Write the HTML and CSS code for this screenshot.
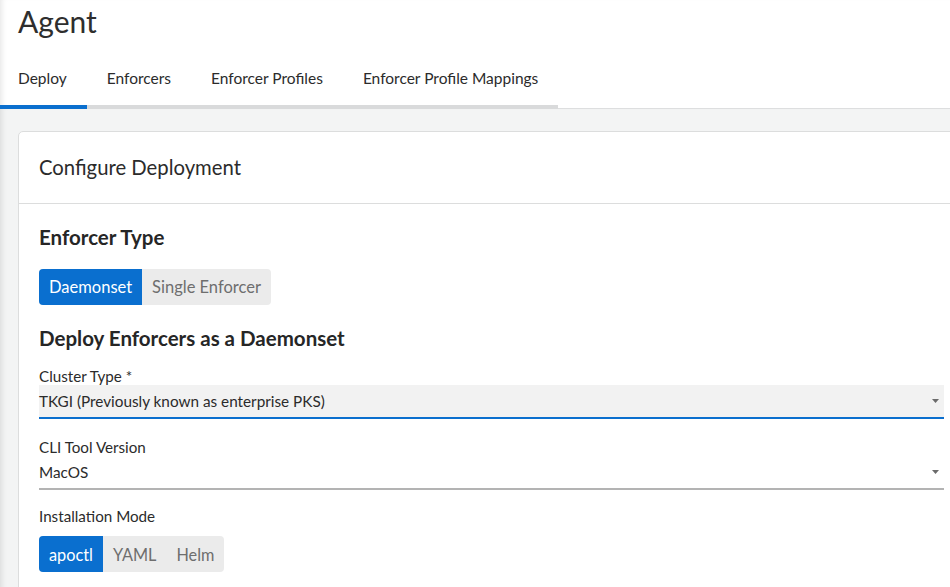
FILE: index.html
```html
<!DOCTYPE html>
<html lang="en">
<head>
<meta charset="utf-8">
<title>Agent</title>
<link rel="stylesheet" href="styles.css">
</head>
<body>
<div class="page">
  <header class="top">
    <h1 class="title">Agent</h1>
    <nav class="tabs">
      <a class="tab active">Deploy</a>
      <a class="tab">Enforcers</a>
      <a class="tab">Enforcer Profiles</a>
      <a class="tab">Enforcer Profile Mappings</a>
    </nav>
  </header>
  <main class="content">
    <section class="card">
      <div class="card-head">Configure Deployment</div>
      <div class="card-body">
        <h2 class="section-title">Enforcer Type</h2>
        <div class="seg seg-type">
          <span class="seg-btn on">Daemonset</span>
          <span class="seg-btn">Single Enforcer</span>
        </div>
        <h2 class="section-title sub">Deploy Enforcers as a Daemonset</h2>
        <div class="field first">
          <div class="label">Cluster Type *</div>
          <div class="select focused">
            <span class="value">TKGI (Previously known as enterprise PKS)</span>
            <svg class="caret" width="7" height="4" viewBox="0 0 7 4"><polygon points="0,0 7,0 3.5,4" fill="#6b6b6b"/></svg>
          </div>
        </div>
        <div class="field second">
          <div class="label">CLI Tool Version</div>
          <div class="select">
            <span class="value">MacOS</span>
            <svg class="caret" width="7" height="4" viewBox="0 0 7 4"><polygon points="0,0 7,0 3.5,4" fill="#6b6b6b"/></svg>
          </div>
        </div>
        <div class="field third">
          <div class="label">Installation Mode</div>
          <div class="seg seg-mode">
            <span class="seg-btn on">apoctl</span>
            <span class="seg-btn">YAML</span>
            <span class="seg-btn">Helm</span>
          </div>
        </div>
      </div>
    </section>
  </main>
</div>
</body>
</html>
```
FILE: styles.css
```css
* { box-sizing: border-box; }

html, body {
  margin: 0;
  padding: 0;
  height: 100%;
  overflow: hidden;
}

body {
  font-family: Lato, "Noto Sans", "Liberation Sans", sans-serif;
  color: #2b2b2b;
  background: #f3f4f4;
}

.page {
  display: flex;
  flex-direction: column;
  min-height: 100vh;
}

.top {
  background: #fff;
  height: 109px;
  display: flex;
  flex-direction: column;
  box-shadow: inset 6px 0 6px -5px rgba(0, 0, 0, 0.12), inset 0 -1px 0 #dedfe0;
}

.title {
  margin: 0;
  padding: 4px 0 0 18px;
  font-size: 30px;
  line-height: 35px;
  font-weight: 400;
  color: #2e2e2e;
}

.tabs {
  display: flex;
  align-self: flex-start;
}

.tab {
  display: block;
  padding: 30px 20px 18px;
  font-size: 15.5px;
  line-height: 18px;
  color: #2b2b2b;
  border-bottom: 4px solid #d9dadb;
}

.tab:first-child {
  padding-left: 18px;
}

.tab.active {
  border-bottom-color: #0b6fce;
}

.content {
  flex: 1;
  padding: 22px 0 0 18px;
  box-shadow: inset 6px 0 6px -5px rgba(0, 0, 0, 0.12);
}

.card {
  background: #fff;
  border: 1px solid #dcdddd;
  border-radius: 5px;
  margin-right: -15px;
  min-height: 100%;
}

.card-head {
  padding: 23px 20px 24px;
  font-size: 20.3px;
  line-height: 24px;
  color: #2b2b2b;
  border-bottom: 1px solid #dcdddd;
}

.card-body {
  padding: 21px 20px 20px;
}

.section-title {
  margin: 0;
  font-size: 20.5px;
  line-height: 24px;
  font-weight: 700;
  color: #262626;
}

.section-title.sub {
  margin-top: 21px;
}

.seg {
  display: inline-flex;
  background: #ebebeb;
  border-radius: 4px;
  overflow: hidden;
  height: 36px;
}

.seg-type {
  margin-top: 20px;
}

.seg-btn {
  display: flex;
  align-items: center;
  padding: 0 10px;
  font-size: 16.5px;
  color: #6e6e6e;
}

.seg-mode .seg-btn {
  font-size: 16.3px;
}

.seg-btn.on {
  background: #0a6fcf;
  color: #fff;
}

.field.first { margin-top: 17px; }
.field.second { margin-top: 19px; }
.field.third { margin-top: 17px; }

.label {
  font-size: 15.2px;
  line-height: 18px;
  color: #2b2b2b;
}

.select {
  display: flex;
  align-items: center;
  justify-content: space-between;
  height: 34px;
  padding: 0 5px 0 0;
  border-bottom: 2px solid #b3b3b3;
  font-size: 15.3px;
  color: #2b2b2b;
}

.select.focused {
  background: #f2f2f2;
  border-bottom-color: #0b6fce;
}

.select .value {
  line-height: 32px;
}

.caret {
  display: block;
}

.seg-mode {
  margin-top: 11px;
}
```
